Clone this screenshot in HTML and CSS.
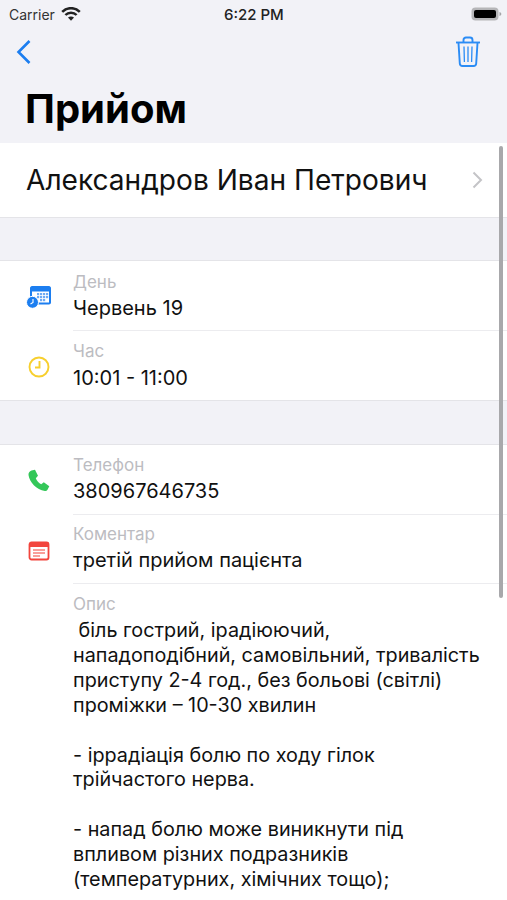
FILE: index.html
```html
<!DOCTYPE html>
<html lang="en">
<head>
  <meta charset="UTF-8">
  <meta name="viewport" content="width=device-width, initial-scale=1.0">
  <title>Прийом</title>
  <link rel="stylesheet" href="styles.css">
</head>
<body>
  <div class="screen">
    <!-- Status bar -->
    <div class="status-bar">
      <div class="status-left">
        <span>Carrier</span>
        <svg class="wifi" width="20" height="14" viewBox="0 0 20 14"><path d="M1.2 4.9C6-.1 14-.1 18.8 4.9" fill="none" stroke="#222" stroke-width="2.5"/><path d="M4.4 8C7.4 4.9 12.6 4.9 15.600 8" fill="none" stroke="#222" stroke-width="2.500"/><path d="M7 10.6c1.700-1.500 4.300-1.500 6 0l-3 3.200z" fill="#222"/></svg>
      </div>
      <span class="status-time">6:22 PM</span>
      <svg class="battery" width="31" height="14" viewBox="0 0 31 14"><rect x="0.500" y="0.500" width="27" height="13" rx="4" fill="#b5b5b8"/><rect x="3" y="3" width="22" height="8" rx="2" fill="#000"/><path d="M28.500 5v4c1-.2 1.800-1 1.800-2s-.8-1.800-1.800-2z" fill="#a5a5a8"/></svg>
    </div>

    <!-- Nav bar -->
    <div class="nav-bar">
      <svg width="16" height="26" viewBox="0 0 16 26"><path d="M13.500 2L2.500 13l11 11" fill="none" stroke="#1c7ef0" stroke-width="2.600"/></svg>
      <svg width="26" height="32" viewBox="0 0 26 32" fill="none" stroke="#2b8cf5" stroke-width="1.900"><path d="M1 6.500h24"/><path d="M8.500 6V4c0-1.500 1-2.500 2.500-2.500h4c1.500 0 2.500 1 2.500 2.500v2"/><path d="M3.500 7l1.300 20.500c.1 1.600 1.200 2.500 2.700 2.500h11c1.500 0 2.600-.9 2.700-2.500L22.500 7"/><path d="M9 10.500l.4 15.500M13 10.500V26M17 10.500L16.600 26" stroke-width="1.300"/></svg>
    </div>
    <h1 class="title">Прийом</h1>

    <div class="patient-row">
      <span class="patient-name">Александров Иван Петрович</span>
      <svg width="11" height="18" viewBox="0 0 11 18"><path d="M1.500 1.500L9 9l-7.500 7.500" fill="none" stroke="#c4c4c7" stroke-width="2"/></svg>
    </div>

    <div class="gap gap-first"></div>

    <div class="section">
      <div class="item item-first">
        <div class="item-icon">
          <svg width="26" height="24" viewBox="0 0 26 24"><path d="M6 1h17c1 0 2 1 2 2v14.500c0 1-1 2-2 2H6c-1 0-2-1-2-2V3c0-1 1-2 2-2z" fill="#1c7ef0"/><rect x="6" y="6.500" width="17" height="11" fill="#fff"/><g fill="#6eaaf3"><rect x="11" y="8" width="2.200" height="2.200"/><rect x="14" y="8" width="2.200" height="2.200"/><rect x="17" y="8" width="2.200" height="2.200"/><rect x="20" y="8" width="2.200" height="2.200"/><rect x="11" y="11" width="2.200" height="2.200"/><rect x="14" y="11" width="2.200" height="2.200"/><rect x="17" y="11" width="2.200" height="2.200"/><rect x="20" y="11" width="2.200" height="2.200"/><rect x="14" y="14" width="2.200" height="2.200"/><rect x="17" y="14" width="2.200" height="2.200"/></g><circle cx="6.500" cy="17.300" r="6" fill="#1c7ef0" stroke="#fff" stroke-width="1"/><path d="M7 14v3.500l-2.500 1.500" fill="none" stroke="#fff" stroke-width="1.100"/></svg>
        </div>
        <div class="item-body">
          <div class="item-label">День</div>
          <div class="item-value">Червень 19</div>
        </div>
      </div>
      <div class="item item-end">
        <div class="item-icon">
          <svg width="22" height="22" viewBox="0 0 22 22" fill="none" stroke="#f7cf2e" stroke-width="1.900"><circle cx="11" cy="11" r="9.500"/><path d="M11.500 5v6.500H7"/></svg>
        </div>
        <div class="item-body">
          <div class="item-label">Час</div>
          <div class="item-value">10:01 - 11:00</div>
        </div>
      </div>
    </div>

    <div class="gap"></div>

    <div class="section">
      <div class="item">
        <div class="item-icon">
          <svg width="24" height="24" viewBox="0 0 24 24"><path d="M4.500 1.500L8 .8l3 6-2.200 2.400c.8 2.200 3.200 5 5.400 6l2.600-2 5.500 4-1.800 3.600c-.6 1-1.500 1.400-2.600 1.200C9.500 21 2.300 12.800 1.500 6c-.2-2 1-3.800 3-4.500z" fill="#34c759"/></svg>
        </div>
        <div class="item-body">
          <div class="item-label">Телефон</div>
          <div class="item-value">380967646735</div>
        </div>
      </div>
      <div class="item item-short">
        <div class="item-icon">
          <svg width="22" height="20" viewBox="0 0 22 20"><rect x="1.500" y="1.500" width="19" height="17" rx="2" fill="#fff" stroke="#f2453d" stroke-width="1.800"/><rect x="1.500" y="1.500" width="19" height="4.500" fill="#f2453d"/><path d="M5 9h12M5 12h12M5 15h7" stroke="#f7807a" stroke-width="1.600"/></svg>
        </div>
        <div class="item-body">
          <div class="item-label">Коментар</div>
          <div class="item-value">третій прийом пацієнта</div>
        </div>
      </div>
      <div class="item item-last">
        <div class="item-icon"></div>
        <div class="item-body">
          <div class="item-label">Опис</div>
          <div class="item-text"> біль гострий, ірадіюючий,
нападоподібний, самовільний, тривалість
приступу 2-4 год., без больові (світлі)
проміжки – 10-30 хвилин

- іррадіація болю по ходу гілок
трійчастого нерва.

- напад болю може виникнути під
впливом різних подразників
(температурних, хімічних тощо);</div>
        </div>
      </div>
    </div>

    <div class="scroll-thumb"></div>
  </div>
</body>
</html>
```

FILE: styles.css
```css
/* General Styles */
html, body {
  margin: 0;
  height: 100%;
}

body {
  font-family: 'Inter', 'Liberation Sans', sans-serif;
  background: #fff;
  color: #111;
}

.screen {
  position: relative;
  width: 507px;
  height: 900px;
  overflow: hidden;
  background: #fff;
}

/* Header */
.status-bar {
  display: flex;
  justify-content: space-between;
  align-items: center;
  height: 28px;
  padding: 0 5px 0 9px;
  background: #f2f2f7;
  font-size: 14px;
  color: #333;
  position: relative;
}

.status-left {
  display: flex;
  align-items: center;
  gap: 6px;
}

.status-time {
  position: absolute;
  left: 224px;
  font-weight: 500;
  font-size: 15px;
  color: #222;
}

.nav-bar {
  display: flex;
  justify-content: space-between;
  align-items: center;
  height: 48px;
  padding: 0 26px 0 16px;
  background: #f2f2f7;
}

.title {
  margin: 0;
  height: 67px;
  padding-left: 25px;
  box-sizing: border-box;
  background: #f2f2f7;
  font-size: 40px;
  line-height: 66px;
  font-weight: 700;
  color: #000;
}

/* Patient row */
.patient-row {
  display: flex;
  justify-content: space-between;
  align-items: center;
  height: 75px;
  padding: 0 24px 0 26px;
  box-sizing: border-box;
  border-bottom: 1px solid #e4e4e8;
}

.patient-name {
  font-size: 28.1px;
  color: #111;
}

.gap {
  height: 44px;
  background: #f2f2f7;
  border-bottom: 1px solid #e4e4e8;
  box-sizing: border-box;
}

.gap-first {
  height: 43px;
}

/* Rows */
.item {
  display: flex;
  height: 70px;
}

.item-icon {
  flex: 0 0 73px;
  display: flex;
  justify-content: center;
  align-items: center;
  padding: 2px 0 0 5px;
  box-sizing: border-box;
}

.item-body {
  flex: 1;
  min-width: 0;
  box-sizing: border-box;
  padding-top: 8px;
  border-bottom: 1px solid #ececef;
}

.item-first .item-body {
  padding-top: 9px;
}

.item-short {
  height: 69px;
}

.item-short .item-body {
  padding-top: 7px;
}

.item-label {
  font-size: 17px;
  line-height: 24px;
  color: #bcbcc1;
}

.item-value {
  font-size: 20px;
  line-height: 28px;
  color: #111;
}

.item-end {
  border-bottom: 1px solid #e4e4e8;
  box-sizing: border-box;
}

.item-end .item-body {
  border-bottom: none;
}

.item-end .item-value {
  margin-top: 1px;
}

.item-last {
  height: auto;
}

.item-last .item-icon {
  padding: 0;
}

.item-last .item-body {
  border-bottom: none;
}

.item-text {
  margin-top: 2px;
  font-size: 19.8px;
  line-height: 24.9px;
  color: #111;
  white-space: pre-wrap;
}

/* Overlay scrollbar */
.scroll-thumb {
  position: absolute;
  left: 499px;
  top: 146px;
  width: 4px;
  height: 452px;
  border-radius: 2px;
  background: #a8a8ab;
}
```
